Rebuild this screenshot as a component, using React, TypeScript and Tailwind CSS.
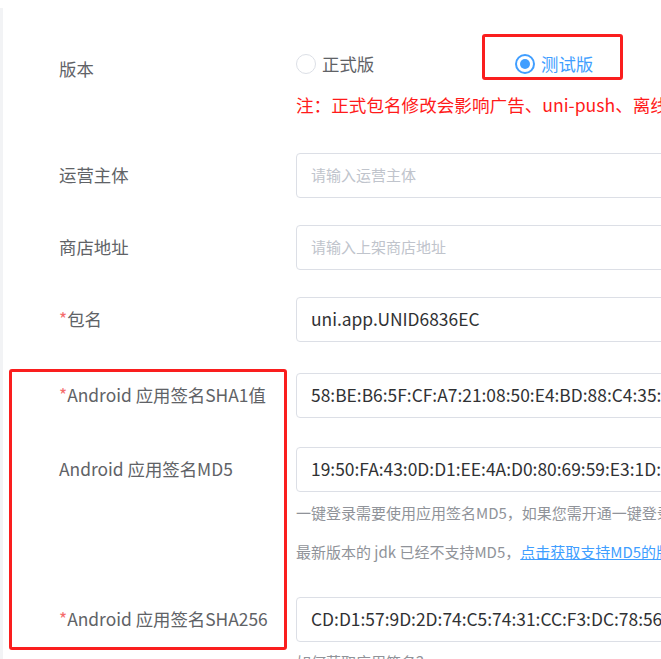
import React from "react";

const font = { fontFamily: '"Noto Sans CJK SC", "Noto Sans", sans-serif' };

function Label({ text, required }: { text: string; required?: boolean }) {
  return (
    <div className="w-[293px] shrink-0 pl-[56px] h-[45px] flex items-center text-[17.4px] text-[#606266] whitespace-nowrap">
      {required && <span className="text-[#f56c6c]">*</span>}
      {text}
    </div>
  );
}

function Input({ value, placeholder }: { value?: string; placeholder?: string }) {
  return (
    <div className="h-[45px] w-[500px] shrink-0 rounded-[4px] border border-[#dcdfe6] bg-white flex items-center pl-[14px] overflow-hidden whitespace-nowrap">
      {value ? (
        <span className="text-[17.4px] text-[#303133]">{value}</span>
      ) : (
        <span className="text-[15px] text-[#c0c4cc]">{placeholder}</span>
      )}
    </div>
  );
}

function Radio({ label, checked }: { label: string; checked?: boolean }) {
  return (
    <div className="flex items-center gap-[6px]">
      <span
        className={
          checked
            ? "w-[20px] h-[20px] rounded-full border-2 border-[#409eff] flex items-center justify-center"
            : "w-[20px] h-[20px] rounded-full border border-[#dcdfe6]"
        }
      >
        {checked && <span className="w-[10px] h-[10px] rounded-full bg-[#409eff]" />}
      </span>
      <span className={checked ? "text-[17.4px] text-[#409eff]" : "text-[17.4px] text-[#606266]"}>{label}</span>
    </div>
  );
}

export default function App() {
  return (
    <div className="w-[661px] h-[659px] overflow-hidden bg-white relative" style={font}>
      <div className="mt-2 h-full border-l-[3px] border-[#f2f3f5]">
        {/* 版本 */}
        <div className="flex pt-[34px]">
          <div className="mt-[5px]">
            <Label text="版本" />
          </div>
          <div className="flex-1 min-w-0 overflow-hidden">
            <div className="h-[45px] flex items-center">
              <div className="w-[219px] shrink-0">
                <Radio label="正式版" />
              </div>
              <Radio label="测试版" checked />
            </div>
            <div className="mt-[6px] leading-[24px] text-[17.6px] text-[#ff1a1a] whitespace-nowrap">
              注：正式包名修改会影响广告、uni-push、离线打包等功能
            </div>
          </div>
        </div>

        {/* 运营主体 */}
        <div className="flex mt-[36px]">
          <Label text="运营主体" />
          <Input placeholder="请输入运营主体" />
        </div>

        <div className="flex mt-[27px]">
          <Label text="商店地址" />
          <Input placeholder="请输入上架商店地址" />
        </div>

        <div className="flex mt-[27px]">
          <Label text="包名" required />
          <Input value="uni.app.UNID6836EC" />
        </div>

        <div className="flex mt-[31px]">
          <Label text="Android 应用签名SHA1值" required />
          <Input value="58:BE:B6:5F:CF:A7:21:08:50:E4:BD:88:C4:35:2A:91:7E" />
        </div>

        <div className="flex mt-[29px]">
          <Label text="Android 应用签名MD5" />
          <div className="min-w-0">
            <Input value="19:50:FA:43:0D:D1:EE:4A:D0:80:69:59:E3:1D:6B:22" />
            <div className="mt-[9px] leading-[24px] text-[15px] text-[#909399] whitespace-nowrap">
              一键登录需要使用应用签名MD5，如果您需开通一键登录，请填写此项
            </div>
            <div className="mt-[15px] leading-[24px] text-[15px] text-[#909399] whitespace-nowrap">
              最新版本的 jdk 已经不支持MD5，
              <span className="text-[#409eff] underline">点击获取支持MD5的版本</span>
            </div>
          </div>
        </div>

        <div className="flex mt-[33px]">
          <Label text="Android 应用签名SHA256" required />
          <div className="min-w-0">
            <Input value="CD:D1:57:9D:2D:74:C5:74:31:CC:F3:DC:78:56:AB:10" />
            <div className="mt-[8px] leading-[24px] text-[15px] text-[#909399] whitespace-nowrap">
              如何获取应用签名？
            </div>
          </div>
        </div>
      </div>

      {/* 标注框 */}
      <div className="absolute left-[482px] top-[34px] w-[141px] h-[46px] border-[3px] border-[#fa1e1e] rounded-[3px] pointer-events-none" />
      <div className="absolute left-[9px] top-[369px] w-[278px] h-[281px] border-[3px] border-[#fa1e1e] rounded-[3px] pointer-events-none" />
    </div>
  );
}
